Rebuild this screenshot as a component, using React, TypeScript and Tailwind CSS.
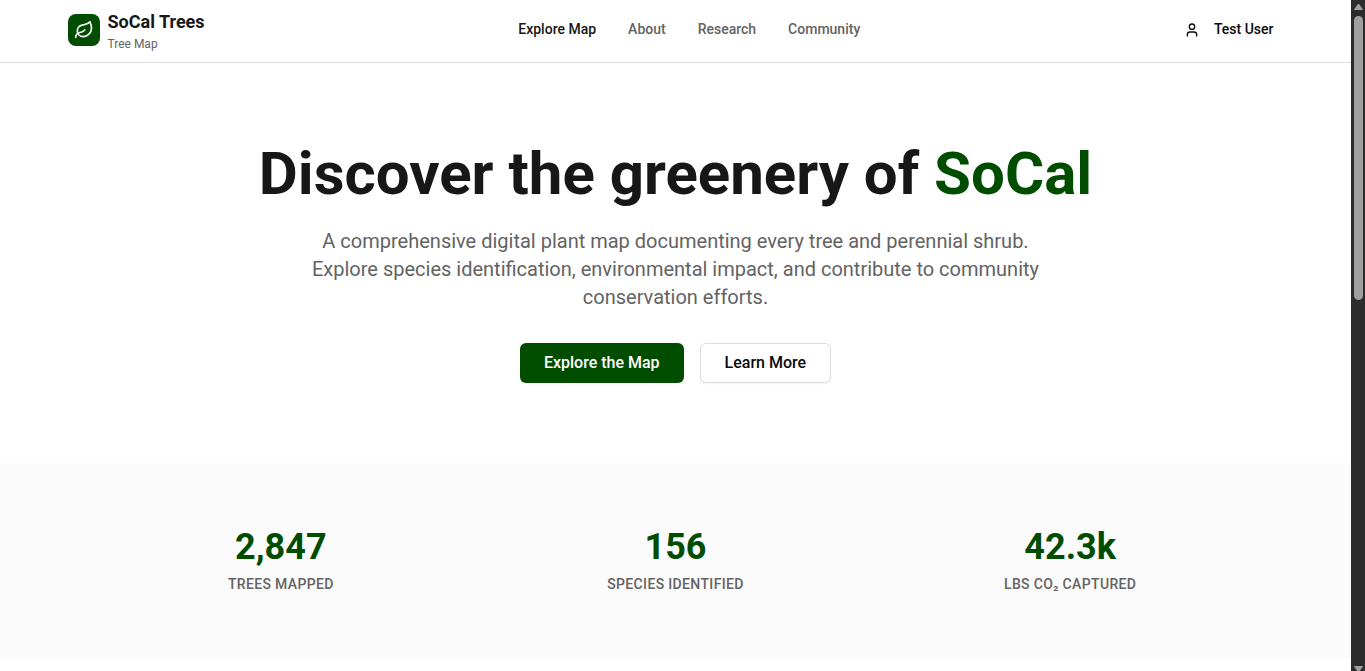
import { Leaf, User } from 'lucide-react';

const navItems = [
  { label: 'Explore Map', active: true },
  { label: 'About', active: false },
  { label: 'Research', active: false },
  { label: 'Community', active: false },
];

const stats = [
  { value: '2,847', label: 'Trees Mapped' },
  { value: '156', label: 'Species Identified' },
  { value: '42.3k', label: 'lbs CO₂ Captured' },
];

function Header() {
  return (
    <header className="h-[63px] shrink-0 border-b border-[#dedede] bg-white">
      <div className="mx-auto flex h-[60px] max-w-[1280px] items-center justify-between px-8">
        <div className="flex items-center gap-2">
          <div className="flex h-8 w-8 items-center justify-center rounded-lg bg-[#004d00]">
            <Leaf className="h-5 w-5 text-white" />
          </div>
          <div className="pt-0.5">
            <h1 className="text-lg font-bold leading-[22px] text-[#171717]">SoCal Trees</h1>
            <p className="mt-[3px] text-xs text-[#636363]">Tree Map</p>
          </div>
        </div>
        <nav className="flex gap-8 pb-0.5 text-sm font-medium">
          {navItems.map((item) => (
            <a key={item.label} href="#" className={item.active ? 'text-[#171717]' : 'text-[#636363]'}>
              {item.label}
            </a>
          ))}
        </nav>
        <button className="flex items-center gap-[14px] px-[10px] text-sm font-medium text-[#0a0a0a]">
          <User className="h-4 w-4" />
          <span className="pb-0.5">Test User</span>
        </button>
      </div>
    </header>
  );
}

function Hero() {
  return (
    <section className="h-[400px] shrink-0 pt-[81px] text-center">
      <h2 className="text-6xl font-bold leading-[60px] text-[#171717]">
        Discover the greenery of <span className="text-[#004d00]">SoCal</span>
      </h2>
      <p className="mx-auto mt-[23px] max-w-3xl text-xl text-[#636363]">
        A comprehensive digital plant map documenting every tree and perennial shrub. Explore species
        identification, environmental impact, and contribute to community conservation efforts.
      </p>
      <div className="mt-8 flex justify-center gap-4 font-medium">
        <button className="h-10 rounded-md bg-[#004d00] px-6 text-white">Explore the Map</button>
        <button className="h-10 rounded-md border border-[#dedede] bg-white px-6 text-[#0a0a0a] shadow-xs">
          Learn More
        </button>
      </div>
    </section>
  );
}

function Stats() {
  return (
    <section className="h-[196px] shrink-0 bg-[#fbfbfb] pt-16">
      <div className="mx-auto grid max-w-6xl grid-cols-3 gap-8 text-center">
        {stats.map((stat) => (
          <div key={stat.label}>
            <div className="text-4xl font-bold text-[#004d00]">{stat.value}</div>
            <div className="mt-[7px] text-sm font-medium uppercase tracking-wide text-[#636363]">{stat.label}</div>
          </div>
        ))}
      </div>
    </section>
  );
}

function Scrollbar() {
  return (
    <div className="flex w-[14px] shrink-0 flex-col items-center justify-between bg-[#2c2c2c]">
      <div className="flex flex-col items-center">
        <svg className="h-4 w-[14px]" viewBox="0 0 14 16">
          <path d="M7.5 4 L11.5 9.5 H3.5 Z" fill="#9f9f9f" stroke="#9f9f9f" strokeLinejoin="round" />
        </svg>
        <div className="ml-px h-[284px] w-[9px] rounded-full bg-[#9f9f9f]" />
      </div>
      <svg className="h-[5px] w-[14px]" viewBox="0 0 14 5">
        <path d="M3.5 .5 H11.5 L7.5 6 Z" fill="#9f9f9f" stroke="#9f9f9f" strokeLinejoin="round" />
      </svg>
    </div>
  );
}

export default function App() {
  return (
    <div className="flex h-[671px] overflow-hidden bg-white font-['Roboto',sans-serif]">
      <main className="flex min-w-0 flex-1 flex-col">
        <Header />
        <Hero />
        <Stats />
      </main>
      <Scrollbar />
    </div>
  );
}
